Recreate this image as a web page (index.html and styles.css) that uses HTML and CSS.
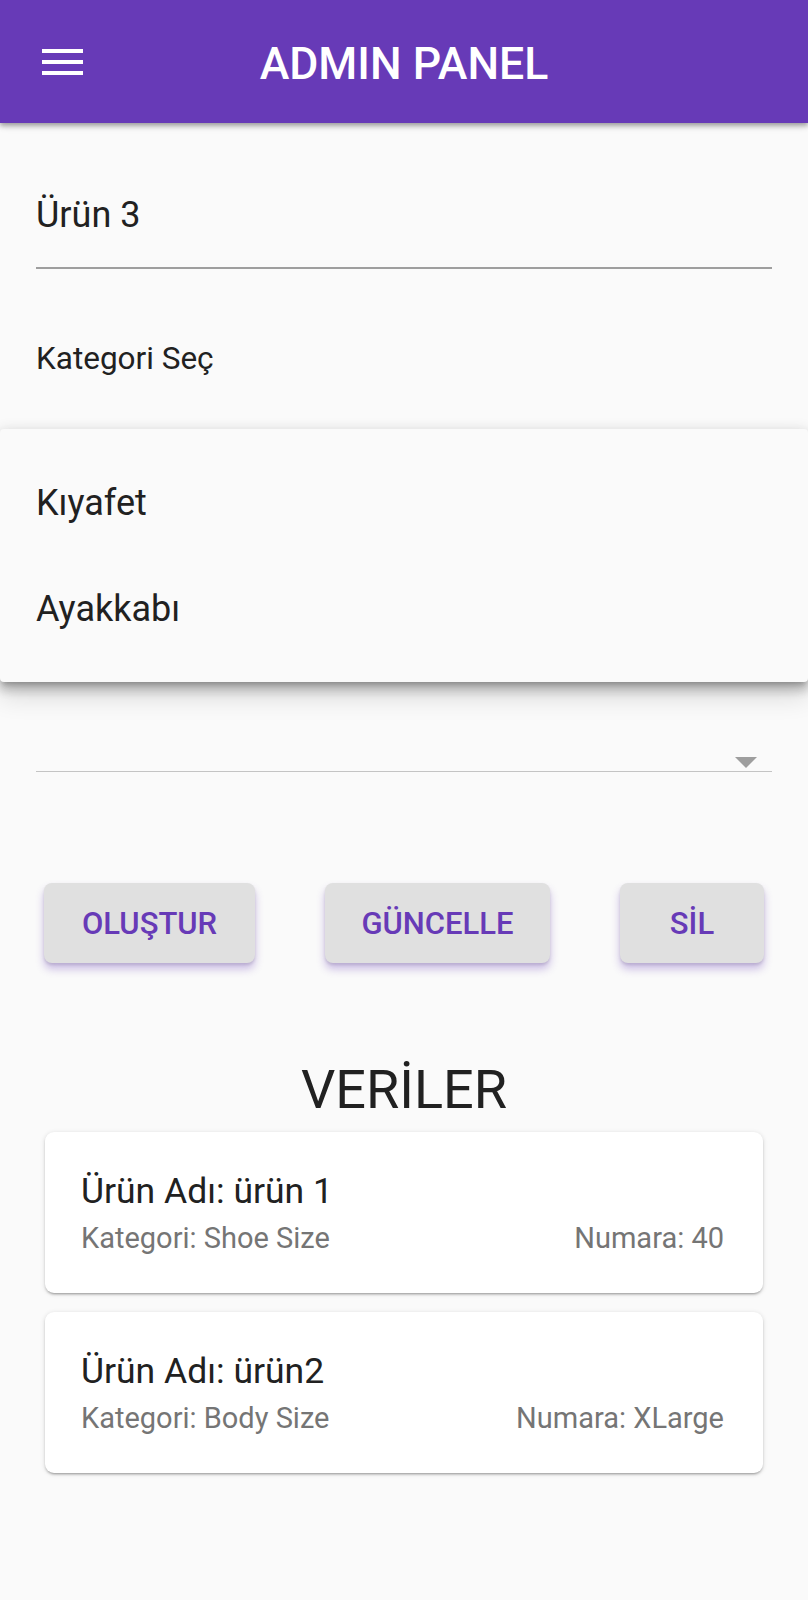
FILE: index.html
```html
<!DOCTYPE html>
<html lang="tr">
<head>
<meta charset="utf-8">
<title>Admin Panel</title>
<link rel="stylesheet" href="styles.css">
</head>
<body>
<div class="screen">
  <header class="appbar">
    <div class="appbar-lead">
      <svg class="menu-icon" width="41" height="26" viewBox="0 0 41 26" aria-hidden="true">
        <rect x="0" y="0" width="41" height="4" fill="#fff"/>
        <rect x="0" y="11" width="41" height="4" fill="#fff"/>
        <rect x="0" y="22" width="41" height="4" fill="#fff"/>
      </svg>
    </div>
    <h1 class="appbar-title">ADMIN PANEL</h1>
    <div></div>
  </header>

  <main class="content">
    <div class="form">
      <div class="textfield">Ürün 3</div>
      <div class="label">Kategori Seç</div>
      <div class="dropdown">
        <span class="dropdown-arrow"></span>
      </div>
    </div>

    <div class="actions">
      <button class="btn btn-create">OLUŞTUR</button>
      <button class="btn btn-update">GÜNCELLE</button>
      <button class="btn btn-delete">SİL</button>
    </div>

    <h2 class="section-title">VERİLER</h2>

    <div class="cards">
      <div class="card">
        <div class="card-title">Ürün Adı: ürün 1</div>
        <div class="card-sub">
          <span>Kategori: Shoe Size</span>
          <span>Numara: 40</span>
        </div>
      </div>
      <div class="card">
        <div class="card-title">Ürün Adı: ürün2</div>
        <div class="card-sub">
          <span>Kategori: Body Size</span>
          <span>Numara: XLarge</span>
        </div>
      </div>
    </div>
  </main>

  <div class="menu">
    <div class="menu-item">Kıyafet</div>
    <div class="menu-item">Ayakkabı</div>
  </div>
</div>
</body>
</html>
```

FILE: styles.css
```css
* {
  box-sizing: border-box;
}

html, body {
  margin: 0;
  padding: 0;
  background: #fafafa;
}

body {
  font-family: Roboto, "Noto Sans", "Liberation Sans", sans-serif;
  color: #212121;
}

.screen {
  position: relative;
  width: 808px;
  min-height: 1600px;
  background: #fafafa;
}

.appbar {
  position: relative;
  z-index: 2;
  height: 123px;
  background: #673ab7;
  display: grid;
  grid-template-columns: 1fr auto 1fr;
  align-items: center;
  box-shadow: 0 2px 4px rgba(0, 0, 0, 0.2), 0 4px 5px rgba(0, 0, 0, 0.14), 0 1px 10px rgba(0, 0, 0, 0.12);
}

.appbar-lead {
  padding-left: 42px;
  display: flex;
  align-items: center;
}

.menu-icon {
  display: block;
}

.appbar-title {
  margin: 0;
  padding-top: 6px;
  font-size: 44.6px;
  font-weight: 500;
  color: #fff;
  line-height: 1;
}

.content {
  display: flex;
  flex-direction: column;
}

.form {
  padding: 0 36px;
  display: flex;
  flex-direction: column;
}

.textfield {
  margin-top: 68px;
  font-size: 36px;
  line-height: 48px;
  padding-bottom: 28px;
  border-bottom: 2px solid #9e9e9e;
  color: #212121;
}

.label {
  margin-top: 70px;
  font-size: 31.5px;
  line-height: 40px;
  color: #212121;
}

.dropdown {
  margin-top: 344px;
  height: 49px;
  border-bottom: 1px solid #c4c4c4;
  display: flex;
  justify-content: flex-end;
  align-items: flex-end;
  padding-right: 15px;
  padding-bottom: 3px;
}

.dropdown-arrow {
  width: 0;
  height: 0;
  border-left: 11.5px solid transparent;
  border-right: 11.5px solid transparent;
  border-top: 11px solid #9e9e9e;
}

.actions {
  margin-top: 111px;
  padding: 0 44px;
  display: flex;
  justify-content: space-between;
}

.btn {
  height: 80px;
  border: none;
  border-radius: 8px;
  background: #e0e0e0;
  color: #673ab7;
  font-family: Roboto, "Noto Sans", "Liberation Sans", sans-serif;
  font-size: 31px;
  font-weight: 500;
  padding: 0;
  box-shadow: 0 6px 8px rgba(103, 58, 183, 0.32), 0 2px 3px rgba(0, 0, 0, 0.12);
}

.btn-create { width: 211px; }
.btn-update { width: 225px; }
.btn-delete { width: 144px; }

.section-title {
  margin: 96px 0 0;
  text-align: center;
  font-size: 54px;
  font-weight: 400;
  line-height: 62px;
  color: #212121;
}

.cards {
  margin-top: 11px;
  padding: 0 45px;
  display: flex;
  flex-direction: column;
  gap: 19px;
}

.card {
  background: #fff;
  border-radius: 9px;
  padding: 37px 39px 35px 36px;
  box-shadow: 0 2px 2px rgba(0, 0, 0, 0.14), 0 3px 1px -2px rgba(0, 0, 0, 0.12), 0 1px 5px rgba(0, 0, 0, 0.14);
}

.card-title {
  font-size: 35.5px;
  line-height: 44px;
  color: #212121;
}

.card-sub {
  margin-top: 5px;
  display: flex;
  justify-content: space-between;
  font-size: 29px;
  line-height: 40px;
  color: #757575;
}

.menu {
  position: absolute;
  top: 429px;
  left: 0;
  right: 0;
  height: 253px;
  padding: 21px 0 20px;
  background: #fafafa;
  border-radius: 4px;
  z-index: 3;
  box-shadow: 0 8px 10px 1px rgba(0, 0, 0, 0.14), 0 3px 14px 2px rgba(0, 0, 0, 0.12), 0 5px 5px -3px rgba(0, 0, 0, 0.2), 0 16px 24px rgba(0, 0, 0, 0.12);
}

.menu-item {
  height: 106px;
  line-height: 106px;
  padding-left: 36px;
  font-size: 36px;
  color: #212121;
}
```
